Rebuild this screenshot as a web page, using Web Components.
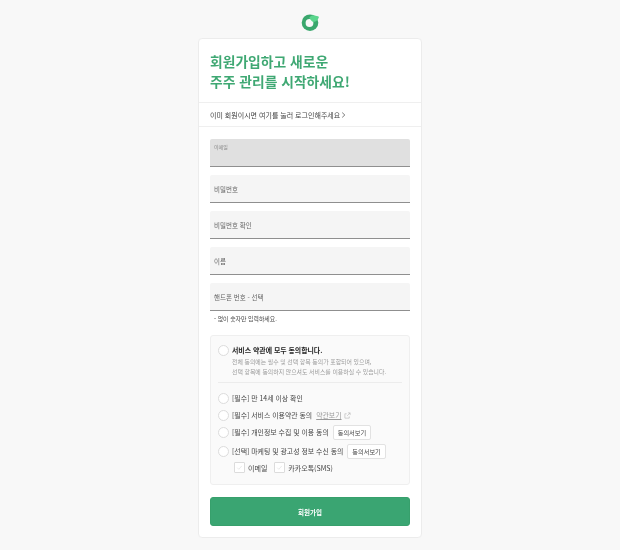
<!DOCTYPE html>
<html lang="ko">
<head>
<meta charset="utf-8">
<title>회원가입</title>
<style>
    html, body {
        margin: 0;
        background: #f8f8f8;
        font-family: "Noto Sans CJK KR", "Noto Sans", sans-serif;
        color: #333;
    }
</style>
</head>
<body>
<signup-page></signup-page>

<script>
'use strict';

class TextField extends HTMLElement {
    constructor() {
        super();
        this.attachShadow({ mode: 'open' });
        this.shadowRoot.innerHTML = `
            <style>
                :host {
                    display: flex;
                    box-sizing: border-box;
                    height: 28px;
                    padding: 0 4px;
                    align-items: center;
                    background: #f5f5f5;
                    border-bottom: 1px solid #8f8f8f;
                    border-radius: 2px 2px 0 0;
                    font-size: 6.5px;
                    color: #666;
                }
                :host([active]) {
                    align-items: flex-start;
                    padding-top: 4px;
                    background: #e0e0e0;
                    font-size: 5px;
                    color: #888;
                }
            </style>
            <slot></slot>
        `;
    }
}

class RoundCheck extends HTMLElement {
    constructor() {
        super();
        this.attachShadow({ mode: 'open' });
        this.shadowRoot.innerHTML = `
            <style>
                :host {
                    display: flex;
                    align-items: center;
                    gap: 3px;
                    font-size: 6.9px;
                    color: #444;
                    min-height: 16px;
                }
                .dot {
                    flex: none;
                    box-sizing: border-box;
                    width: 11px;
                    height: 11px;
                    background: #fff;
                    border: 1px solid #dcdcdc;
                    border-radius: 50%;
                }
            </style>
            <span class="dot"></span>
            <slot></slot>
        `;
    }
}

class SquareCheck extends HTMLElement {
    constructor() {
        super();
        this.attachShadow({ mode: 'open' });
        this.shadowRoot.innerHTML = `
            <style>
                :host {
                    display: flex;
                    align-items: center;
                    gap: 3px;
                    font-size: 7px;
                    color: #444;
                }
                .box {
                    display: flex;
                    flex: none;
                    box-sizing: border-box;
                    width: 11px;
                    height: 11px;
                    background: #fff;
                    border: 1px solid #dcdcdc;
                    border-radius: 1px;
                }
                svg { width: 9px; height: 9px; }
            </style>
            <span class="box">
                <svg viewBox="0 0 8 8"><path d="M2 4.2 3.4 5.6 6 2.6" fill="none" stroke="#e8e8e8" stroke-width="0.8"/></svg>
            </span>
            <slot></slot>
        `;
    }
}

class SmallButton extends HTMLElement {
    constructor() {
        super();
        this.attachShadow({ mode: 'open' });
        this.shadowRoot.innerHTML = `
            <style>
                :host {
                    display: inline-flex;
                    box-sizing: border-box;
                    height: 15px;
                    margin-left: 1px;
                    padding: 0 4px;
                    align-items: center;
                    background: #fff;
                    border: 1px solid #e2e2e2;
                    border-radius: 2px;
                    font-size: 6.2px;
                    color: #444;
                }
            </style>
            <slot></slot>
        `;
    }
}

class TermsBox extends HTMLElement {
    constructor() {
        super();
        this.attachShadow({ mode: 'open' });
        this.shadowRoot.innerHTML = `
            <style>
                :host {
                    display: block;
                    box-sizing: border-box;
                    height: 150px;
                    padding: 6px 7px 0;
                    background: #fafafa;
                    border: 1px solid #efefef;
                    border-radius: 3px;
                }
                .all { font-weight: 700; color: #222; }
                .note {
                    margin: -1px 0 0 14px;
                    font-size: 5.9px;
                    line-height: 10px;
                    color: #9a9a9a;
                }
                hr {
                    height: 1px;
                    margin: 5px 0 7px;
                    background: #ececec;
                    border: 0;
                }
                .list {
                    display: flex;
                    flex-direction: column;
                    gap: 1px;
                }
                .list round-check:last-child { margin-top: 2px; }
                .terms-link {
                    margin-left: 1px;
                    color: #9a9a9a;
                    text-decoration: underline;
                }
                .ext { width: 7px; height: 7px; margin-left: -1px; }
                .subs {
                    display: flex;
                    gap: 7px;
                    margin: 3px 0 0 16px;
                }
            </style>
            <round-check><span class="all">서비스 약관에 모두 동의합니다.</span></round-check>
            <p class="note">전체 동의에는 필수 및 선택 항목 동의가 포함되어 있으며,<br>선택 항목에 동의하지 않으셔도 서비스를 이용하실 수 있습니다.</p>
            <hr>
            <div class="list">
                <round-check>[필수] 만 14세 이상 확인</round-check>
                <round-check>[필수] 서비스 이용약관 동의
                    <span class="terms-link">약관보기</span>
                    <svg class="ext" viewBox="0 0 8 8" fill="none" stroke="#aaa" stroke-width="0.6">
                        <path d="M6 5v2H1V2h2M4.5 1H7v2.5M7 1 3.6 4.4"/>
                    </svg>
                </round-check>
                <round-check>[필수] 개인정보 수집 및 이용 동의 <small-button>동의서보기</small-button></round-check>
                <round-check>[선택] 마케팅 및 광고성 정보 수신 동의 <small-button>동의서보기</small-button></round-check>
            </div>
            <div class="subs">
                <square-check>이메일</square-check>
                <square-check>카카오톡(SMS)</square-check>
            </div>
        `;
    }
}

class SignupPage extends HTMLElement {
    constructor() {
        super();
        this.attachShadow({ mode: 'open' });
        this.shadowRoot.innerHTML = `
            <style>
                :host {
                    display: flex;
                    flex-direction: column;
                    align-items: center;
                    padding-top: 12px;
                    will-change: transform;
                }
                .logo { display: block; width: 20px; height: 20px; margin-bottom: 6px; }
                .card {
                    box-sizing: border-box;
                    width: 224px;
                    height: 500px;
                    background: #fff;
                    border: 1px solid #ececec;
                    border-radius: 4px;
                }
                h1 {
                    margin: 0;
                    padding: 12px 11px 0;
                    height: 64px;
                    box-sizing: border-box;
                    font-size: 13.8px;
                    line-height: 20px;
                    font-weight: 700;
                    color: #3fa873;
                    border-bottom: 1px solid #efefef;
                }
                .login {
                    display: flex;
                    align-items: center;
                    box-sizing: border-box;
                    height: 24px;
                    padding: 0 11px;
                    font-size: 7px;
                    color: #444;
                    border-bottom: 1px solid #efefef;
                }
                .chev { width: 5px; height: 6px; margin-left: 1px; }
                form { padding: 12px 11px 0; }
                .fields {
                    display: flex;
                    flex-direction: column;
                    gap: 8px;
                }
                .hint {
                    margin: 3px 0 11px 4px;
                    height: 10px;
                    font-size: 5.9px;
                    line-height: 10px;
                    color: #444;
                }
                .submit {
                    display: flex;
                    box-sizing: border-box;
                    height: 29px;
                    margin-top: 12px;
                    align-items: center;
                    justify-content: center;
                    background: #3aa572;
                    border: 1px solid #37a06c;
                    border-radius: 3px;
                    font-size: 6.5px;
                    font-weight: 700;
                    color: #fff;
                }
            </style>
            <svg class="logo" viewBox="0 0 20 20">
                <circle cx="10" cy="10.7" r="8.3" fill="#3aa76d"/>
                <circle cx="9.5" cy="11" r="3.9" fill="#f8f8f8"/>
                <path d="M9.3 5.8C10.3 4 12 3 13.5 3.2c1.5.2 2.7.8 4.5 1 .7.1 1 .6.8 1.2-.5 1.7-2.2 3.8-4.3 4.3-1.7.4-3-.5-3.8-2-.4-.8-1.4-.9-1.4-1.9z" fill="#5bd68d"/>
            </svg>
            <div class="card">
                <h1>회원가입하고 새로운<br>주주 관리를 시작하세요!</h1>
                <div class="login">이미 회원이시면 여기를 눌러 로그인해주세요
                    <svg class="chev" viewBox="0 0 5 6"><path d="M1.2.6 3.8 3 1.2 5.4" fill="none" stroke="#444" stroke-width="0.7"/></svg>
                </div>
                <form>
                    <div class="fields">
                        <text-field active>이메일</text-field>
                        <text-field>비밀번호</text-field>
                        <text-field>비밀번호 확인</text-field>
                        <text-field>이름</text-field>
                        <text-field>핸드폰 번호 - 선택</text-field>
                    </div>
                    <p class="hint">- 없이 숫자만 입력하세요.</p>
                    <terms-box></terms-box>
                    <div class="submit">회원가입</div>
                </form>
            </div>
        `;
    }
}

customElements.define('text-field', TextField);
customElements.define('round-check', RoundCheck);
customElements.define('square-check', SquareCheck);
customElements.define('small-button', SmallButton);
customElements.define('terms-box', TermsBox);
customElements.define('signup-page', SignupPage);
</script>
</body>
</html>
